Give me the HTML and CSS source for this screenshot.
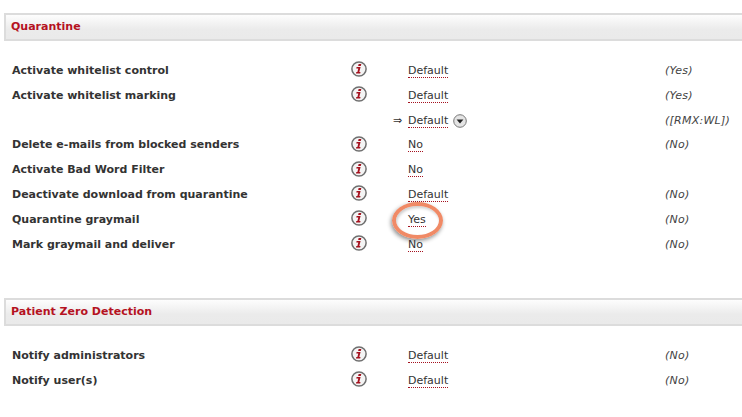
FILE: index.html
```html
<!DOCTYPE html>
<html lang="en">
<head>
<meta charset="utf-8">
<title>Quarantine settings</title>
<link rel="stylesheet" href="styles.css">
</head>
<body>
<svg class="defs" width="0" height="0" aria-hidden="true">
  <defs>
    <symbol id="info" viewBox="0 0 16 16">
      <circle cx="8" cy="8" r="7.1" fill="#f4f4f4" stroke="#6f6f6f" stroke-width="1.5"/>
      <path d="M7.6 2.9h2.7l-.5 2.1H7.1z" fill="#a5121f"/>
      <path d="M5.6 6.1h4L8.3 11h1.2l-.3 1.6H5l.3-1.6h1.1l.9-3.4H5.3z" fill="#a5121f"/>
    </symbol>
  </defs>
</svg>

<section class="section">
  <h2 class="section-title">Quarantine</h2>
  <div class="rows">
    <div class="row"><span class="label">Activate whitelist control</span><svg class="info"><use href="#info"/></svg><span class="value"><span class="link">Default</span></span><span class="inherited">(Yes)</span></div>
    <div class="row"><span class="label">Activate whitelist marking</span><svg class="info"><use href="#info"/></svg><span class="value"><span class="link">Default</span></span><span class="inherited">(Yes)</span></div>
    <div class="row row-sub"><span class="label"></span><span class="arrow">⇒</span><span class="value"><span class="link">Default</span>
      <svg class="drop" viewBox="0 0 14 14"><circle cx="7" cy="7" r="6.3" fill="#e4e4e4" stroke="#777"/><path d="M3.6 5.4h6.8L7 9.4z" fill="#222"/></svg></span><span class="inherited">([RMX:WL])</span></div>
    <div class="row"><span class="label">Delete e-mails from blocked senders</span><svg class="info"><use href="#info"/></svg><span class="value"><span class="link">No</span></span><span class="inherited">(No)</span></div>
    <div class="row"><span class="label">Activate Bad Word Filter</span><svg class="info"><use href="#info"/></svg><span class="value"><span class="link">No</span></span><span class="inherited"></span></div>
    <div class="row"><span class="label">Deactivate download from quarantine</span><svg class="info"><use href="#info"/></svg><span class="value"><span class="link">Default</span></span><span class="inherited">(No)</span></div>
    <div class="row"><span class="label">Quarantine graymail</span><svg class="info"><use href="#info"/></svg><span class="value"><span class="link">Yes</span><span class="callout"></span></span><span class="inherited">(No)</span></div>
    <div class="row"><span class="label">Mark graymail and deliver</span><svg class="info"><use href="#info"/></svg><span class="value"><span class="link">No</span></span><span class="inherited">(No)</span></div>
  </div>
</section>

<section class="section section-second">
  <h2 class="section-title">Patient Zero Detection</h2>
  <div class="rows">
    <div class="row"><span class="label">Notify administrators</span><svg class="info"><use href="#info"/></svg><span class="value"><span class="link">Default</span></span><span class="inherited">(No)</span></div>
    <div class="row"><span class="label">Notify user(s)</span><svg class="info"><use href="#info"/></svg><span class="value"><span class="link">Default</span></span><span class="inherited">(No)</span></div>
  </div>
</section>
</body>
</html>
```

FILE: styles.css
```css
html, body {
  margin: 0;
  padding: 0;
  background: #fff;
  overflow: hidden;
}
body {
  padding-top: 13px;
  height: 404px;
  font-family: "DejaVu Sans", Verdana, sans-serif;
  font-size: 11px;
  color: #333;
}
.defs {
  position: absolute;
}
.section {
  margin-left: 4px;
}
.section-second {
  margin-top: 41.5px;
}
.section-title {
  margin: 0;
  height: 24px;
  padding-left: 5px;
  border: 2px solid #dcdcdc;
  border-right: 0;
  background: linear-gradient(#fdfdfd, #ebebeb 60%, #eaeaea);
  color: #b5121f;
  font-size: 11px;
  font-weight: bold;
  line-height: 24px;
}
.rows {
  padding-top: 17px;
}
.row {
  display: grid;
  grid-template-columns: 339px 57px 257px 1fr;
  align-items: center;
  height: 24.82px;
  padding-left: 8px;
}
.label {
  font-weight: bold;
  color: #333;
}
.info {
  width: 16px;
  height: 16px;
  margin-top: -2px;
}
.arrow {
  justify-self: end;
  padding-right: 6px;
  font-family: "Liberation Sans", sans-serif;
  font-size: 11px;
}
.value {
  position: relative;
  display: flex;
  align-items: center;
  gap: 5px;
  padding-top: 1px;
}
.link {
  border-bottom: 1px dotted #a5121f;
  line-height: 13px;
}
.drop {
  width: 14px;
  height: 14px;
}
.inherited {
  font-style: italic;
  color: #444;
  letter-spacing: .25px;
}
.callout {
  position: absolute;
  left: -16px;
  top: -10px;
  width: 43px;
  height: 29px;
  border: 4px solid #f08a66;
  border-radius: 50%;
  box-shadow: -1px 2px 4px rgba(0, 0, 0, .45), inset 1px 2px 3px rgba(0, 0, 0, .2);
}
```
